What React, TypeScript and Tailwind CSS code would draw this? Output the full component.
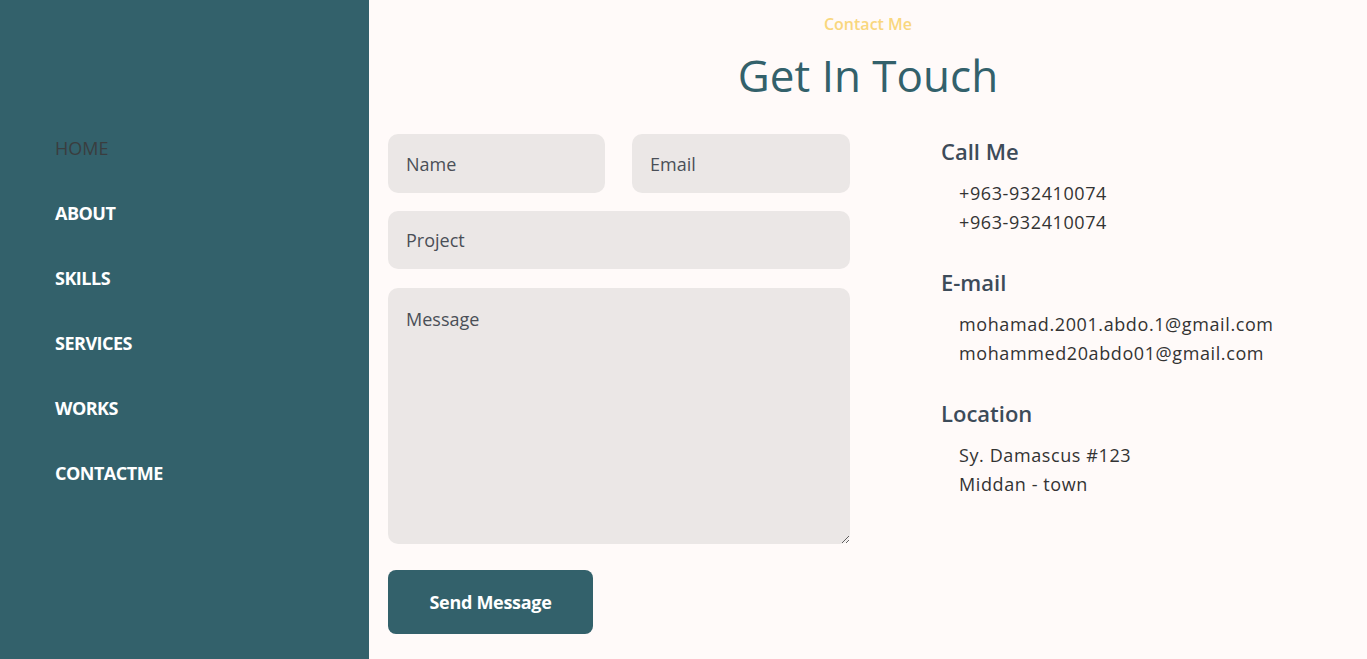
import React from "react";

const navItems = ["HOME", "ABOUT", "SKILLS", "SERVICES", "WORKS", "CONTACTME"];

const InfoBlock: React.FC<{ title: string; lines: string[] }> = ({ title, lines }) => (
  <div className="mb-[30px]">
    <h3 className="text-[22px] font-semibold text-[#3d4b59] leading-[30px] mb-[13px]">{title}</h3>
    {lines.map((line) => (
      <p key={line} className="pl-[18px] text-[18px] leading-[29px] tracking-[0.6px] text-[#333]">
        {line}
      </p>
    ))}
  </div>
);

const App: React.FC = () => {
  return (
    <div
      className="flex h-[659px] w-full overflow-hidden bg-[#fffaf9]"
      style={{ fontFamily: '"Open Sans", sans-serif' }}
    >
      <aside className="w-[369px] shrink-0 bg-[#33616b] pl-[55px] pt-[134px]">
        <ul className="flex flex-col gap-[37px]">
          {navItems.map((item, i) => (
            <li
              key={item}
              className={
                i === 0
                  ? "text-[18px] leading-[28px] text-[#3a3d3f]"
                  : "text-[18px] leading-[28px] font-bold tracking-[-0.5px] text-white"
              }
            >
              {item}
            </li>
          ))}
        </ul>
      </aside>

      <main className="flex-1">
        <div className="pt-[12px] text-center">
          <p className="text-[16px] leading-[24px] font-semibold text-[#f9d77e]">Contact Me</p>
          <h1 className="mt-[11px] text-[44px] leading-[56px] font-medium text-[#33616b]">Get In Touch</h1>
        </div>

        <div className="mt-[31px] flex pl-[19px]">
          <form className="w-[462px]">
            <div className="flex gap-[27px]">
              <input
                placeholder="Name"
                className="h-[59px] w-[217px] rounded-[10px] bg-[#ebe7e6] px-[18px] text-[18px] outline-none placeholder:text-[#4a4f57]"
              />
              <input
                placeholder="Email"
                className="h-[59px] w-[218px] rounded-[10px] bg-[#ebe7e6] px-[18px] text-[18px] outline-none placeholder:text-[#4a4f57]"
              />
            </div>
            <input
              placeholder="Project"
              className="mt-[18px] h-[58px] w-full rounded-[10px] bg-[#ebe7e6] px-[18px] text-[18px] outline-none placeholder:text-[#4a4f57]"
            />
            <textarea
              placeholder="Message"
              className="mt-[19px] block h-[256px] w-full rounded-[10px] bg-[#ebe7e6] px-[18px] pt-[18px] text-[18px] outline-none placeholder:text-[#4a4f57]"
            />
            <button
              type="button"
              className="mt-[26px] h-[64px] w-[205px] rounded-[8px] bg-[#33616b] text-[18px] font-bold tracking-[-0.3px] text-white"
            >
              Send Message
            </button>
          </form>

          <div className="ml-[91px] pt-[2px]">
            <InfoBlock title="Call Me" lines={["+963-932410074", "+963-932410074"]} />
            <InfoBlock
              title="E-mail"
              lines={["mohamad.2001.abdo.1@gmail.com", "mohammed20abdo01@gmail.com"]}
            />
            <InfoBlock title="Location" lines={["Sy. Damascus #123", "Middan - town"]} />
          </div>
        </div>
      </main>
    </div>
  );
};

export default App;
